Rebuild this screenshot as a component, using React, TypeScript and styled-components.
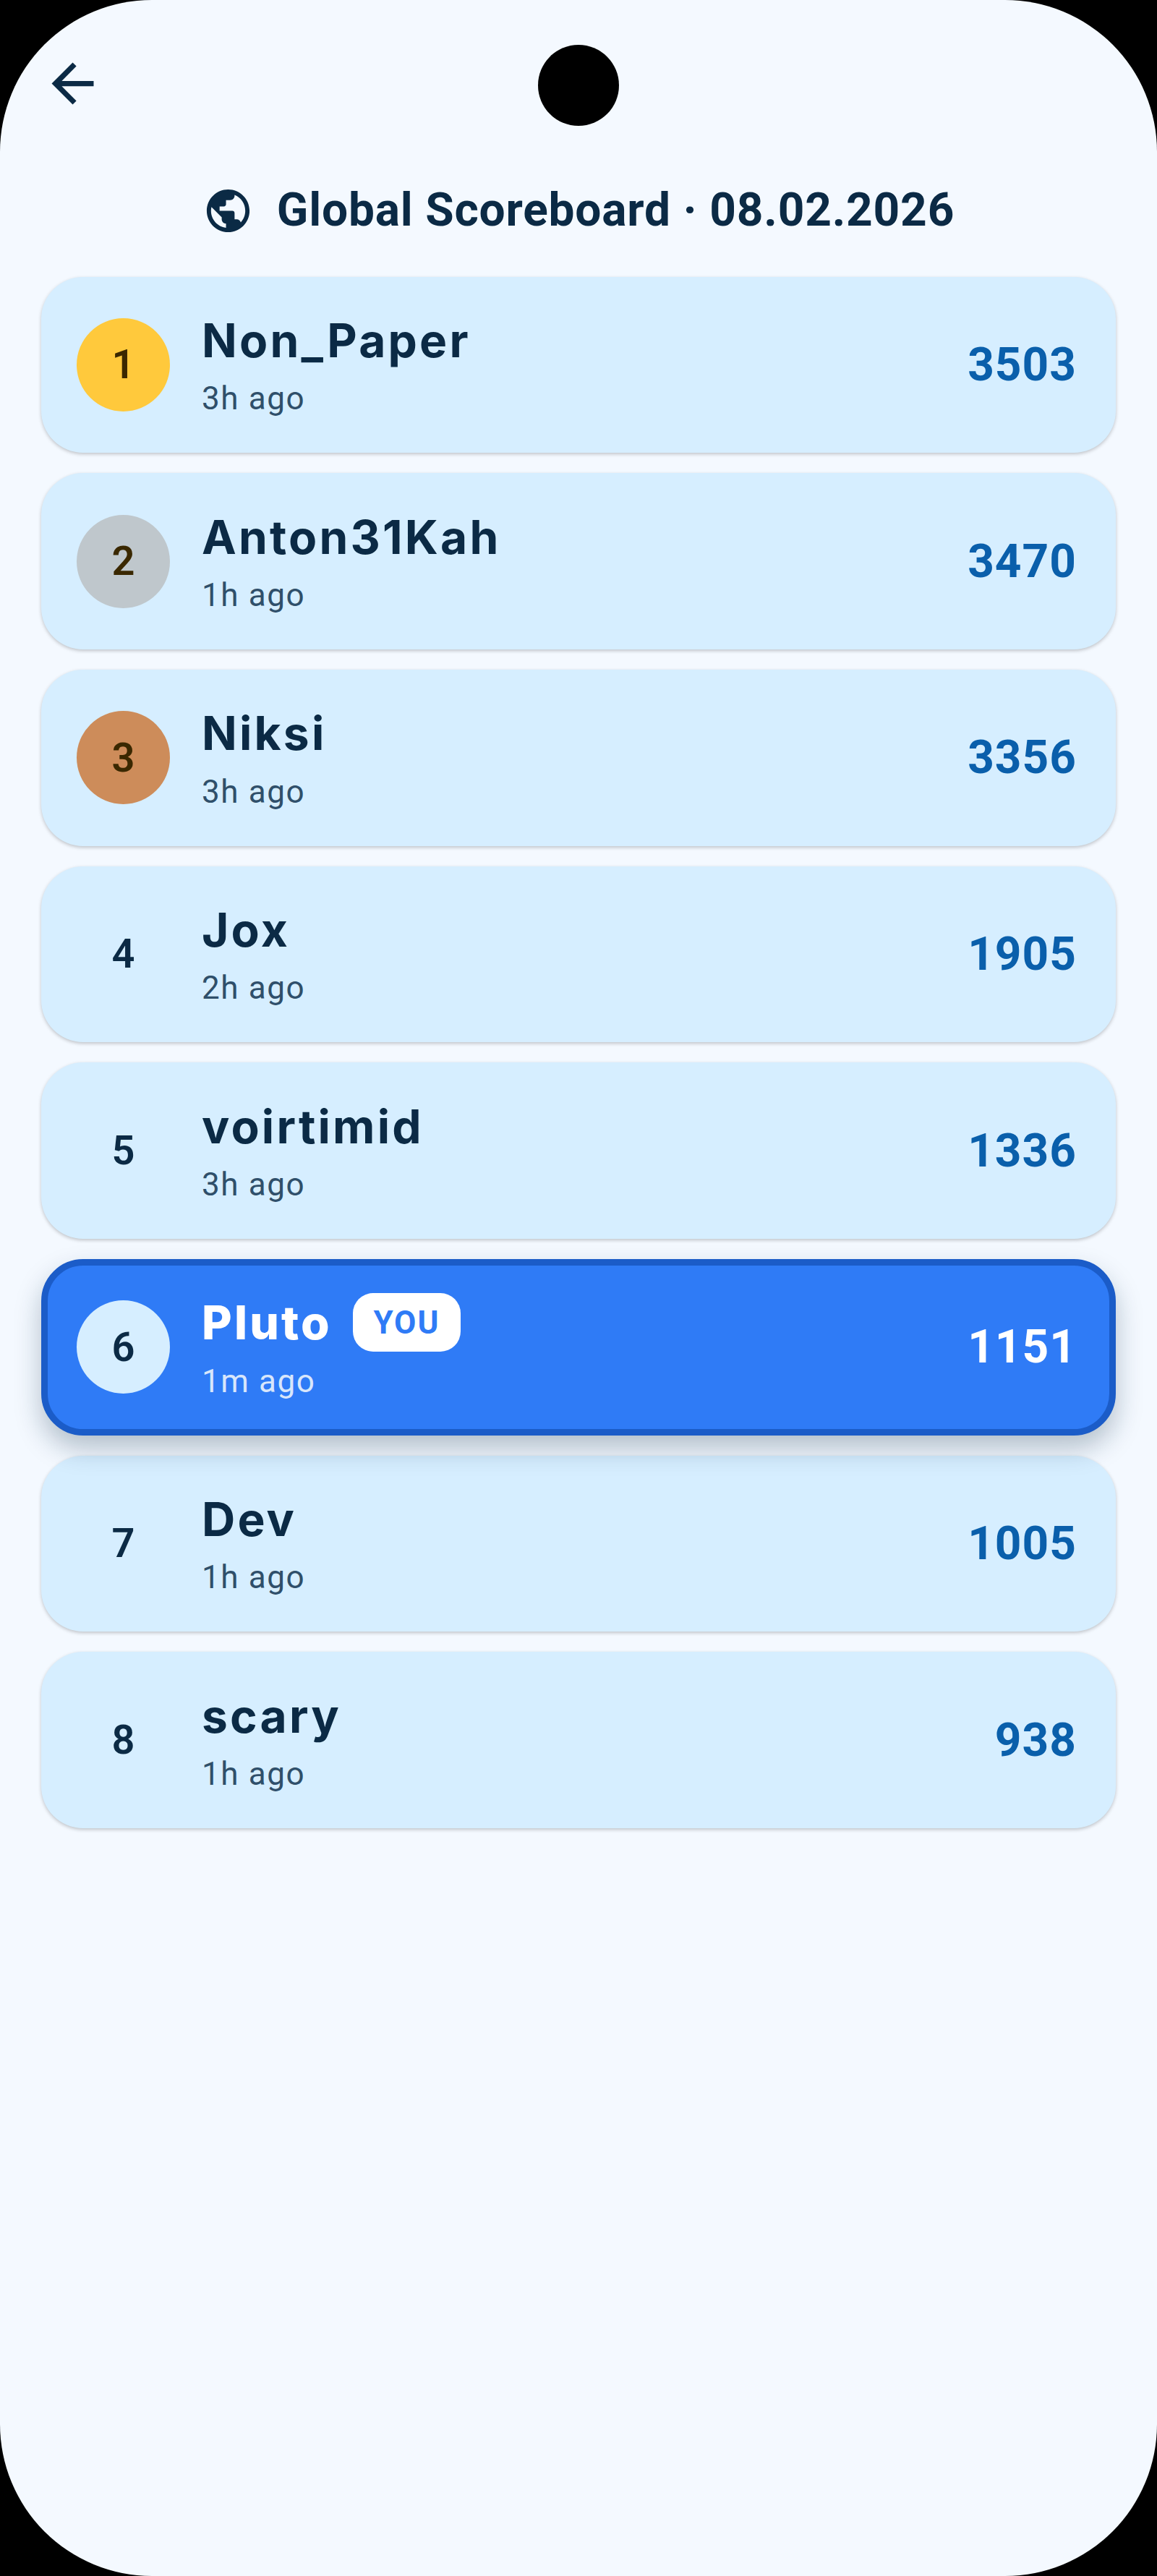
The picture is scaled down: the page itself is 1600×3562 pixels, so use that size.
import React from "react";
import styled, { createGlobalStyle } from "styled-components";

const GlobalStyle = createGlobalStyle`
  html, body {
    margin: 0;
    padding: 0;
    background: #000;
  }
  * {
    box-sizing: border-box;
  }
`;

interface ScoreEntry {
  rank: number;
  name: string;
  time: string;
  score: number;
  isYou?: boolean;
}

const entries: ScoreEntry[] = [
  { rank: 1, name: "Non_Paper", time: "3h ago", score: 3503 },
  { rank: 2, name: "Anton31Kah", time: "1h ago", score: 3470 },
  { rank: 3, name: "Niksi", time: "3h ago", score: 3356 },
  { rank: 4, name: "Jox", time: "2h ago", score: 1905 },
  { rank: 5, name: "voirtimid", time: "3h ago", score: 1336 },
  { rank: 6, name: "Pluto", time: "1m ago", score: 1151, isYou: true },
  { rank: 7, name: "Dev", time: "1h ago", score: 1005 },
  { rank: 8, name: "scary", time: "1h ago", score: 938 },
];

const medalColors: { [rank: number]: string } = {
  1: "#ffc93c",
  2: "#bfc7cc",
  3: "#cd8c5a",
};

const Screen = styled.div`
  position: relative;
  width: 1600px;
  height: 3562px;
  padding: 0 57px;
  background: #f4f9ff;
  border-radius: 210px;
  overflow: hidden;
  font-family: Roboto, sans-serif;
  color: #0b2a45;
`;

const CameraHole = styled.div`
  position: absolute;
  top: 62px;
  left: 744px;
  width: 112px;
  height: 112px;
  border-radius: 50%;
  background: #000;
`;

const TopBar = styled.div`
  display: flex;
  height: 251px;
  padding-top: 72px;
`;

const BackIcon = styled.svg`
  width: 87px;
  height: 87px;
  fill: #0b2a45;
`;

const TitleRow = styled.div`
  display: flex;
  align-items: center;
  justify-content: center;
  gap: 32px;
  height: 80px;
`;

const GlobeIcon = styled.svg`
  width: 71px;
  height: 71px;
  fill: #0b2a45;
`;

const Title = styled.h1`
  margin: 0;
  font-size: 64px;
  font-weight: 700;
  line-height: 80px;
  letter-spacing: 0.8px;
`;

const List = styled.div`
  display: flex;
  flex-direction: column;
  gap: 28px;
  margin-top: 51.5px;
`;

const Card = styled.div<{ $you?: boolean }>`
  display: flex;
  align-items: center;
  height: 243.7px;
  padding: ${(p) => (p.$you ? "0 45px 0 40px" : "0 54px 0 49px")};
  border-radius: 58px;
  background: ${(p) => (p.$you ? "#2f7bf6" : "#d6eeff")};
  border: ${(p) => (p.$you ? "9px solid #1b5cc8" : "0")};
  box-shadow: ${(p) =>
    p.$you
      ? "0 18px 36px rgba(11, 42, 69, 0.28)"
      : "0 2px 5px rgba(0, 0, 0, 0.22)"};
  ${(p) => p.$you && "position: relative;"}
`;

const RankBadge = styled.div<{ $bg?: string; $medal?: boolean }>`
  display: flex;
  align-items: center;
  justify-content: center;
  flex: none;
  width: 129px;
  height: 129px;
  border-radius: 50%;
  background: ${(p) => p.$bg || "transparent"};
  font-size: 56px;
  font-weight: 600;
  color: ${(p) => (p.$medal ? "#3a2800" : "#0b2a45")};
`;

const Info = styled.div`
  display: flex;
  flex-direction: column;
  flex: 1;
  margin-left: 44px;
  padding-bottom: 3px;
`;

const NameRow = styled.div`
  display: flex;
  align-items: center;
  gap: 29px;
  height: 84px;
`;

const Name = styled.div<{ $you?: boolean }>`
  font-family: Inter, sans-serif;
  font-size: 64px;
  font-weight: ${(p) => (p.$you ? 800 : 650)};
  letter-spacing: 3.2px;
  color: ${(p) => (p.$you ? "#fff" : "#0b2a45")};
`;

const YouTag = styled.span`
  display: flex;
  align-items: center;
  justify-content: center;
  width: 149px;
  height: 81px;
  border-radius: 28px;
  background: #fff;
  font-size: 44px;
  font-weight: 700;
  letter-spacing: 2px;
  color: #2f7bf6;
`;

const Time = styled.div<{ $you?: boolean }>`
  margin-top: 13px;
  font-size: 44px;
  line-height: 52px;
  letter-spacing: 1.6px;
  color: ${(p) => (p.$you ? "#d8e6fb" : "#2f4f6a")};
`;

const Score = styled.div<{ $you?: boolean }>`
  font-size: 64px;
  font-weight: 700;
  letter-spacing: 1px;
  color: ${(p) => (p.$you ? "#fff" : "#0a5fab")};
`;

const App = () => (
  <Screen>
    <GlobalStyle />
    <CameraHole />
    <TopBar>
      <BackIcon viewBox="0 0 24 24">
        <path d="M20 11H7.83l5.59-5.59L12 4l-8 8 8 8 1.41-1.41L7.83 13H20v-2z" />
      </BackIcon>
    </TopBar>
    <TitleRow>
      <GlobeIcon viewBox="0 0 24 24">
        <path d="M12 2C6.48 2 2 6.48 2 12s4.48 10 10 10 10-4.48 10-10S17.52 2 12 2zm-1 17.93c-3.95-.49-7-3.85-7-7.93 0-.62.08-1.21.21-1.79L9 15v1c0 1.1.9 2 2 2v1.93zm6.9-2.54c-.26-.81-1-1.39-1.9-1.39h-1v-3c0-.55-.45-1-1-1H8v-2h2c.55 0 1-.45 1-1V7h2c1.1 0 2-.9 2-2v-.41c2.93 1.19 5 4.06 5 7.41 0 2.08-.8 3.97-2.1 5.39z" />
      </GlobeIcon>
      <Title>Global Scoreboard · 08.02.2026</Title>
    </TitleRow>
    <List>
      {entries.map((entry) => (
        <Card key={entry.rank} $you={entry.isYou}>
          <RankBadge
            $bg={entry.isYou ? "#d6eeff" : medalColors[entry.rank]}
            $medal={entry.rank <= 3}
          >
            {entry.rank}
          </RankBadge>
          <Info>
            <NameRow>
              <Name $you={entry.isYou}>{entry.name}</Name>
              {entry.isYou && <YouTag>YOU</YouTag>}
            </NameRow>
            <Time $you={entry.isYou}>{entry.time}</Time>
          </Info>
          <Score $you={entry.isYou}>{entry.score}</Score>
        </Card>
      ))}
    </List>
  </Screen>
);

export default App;
